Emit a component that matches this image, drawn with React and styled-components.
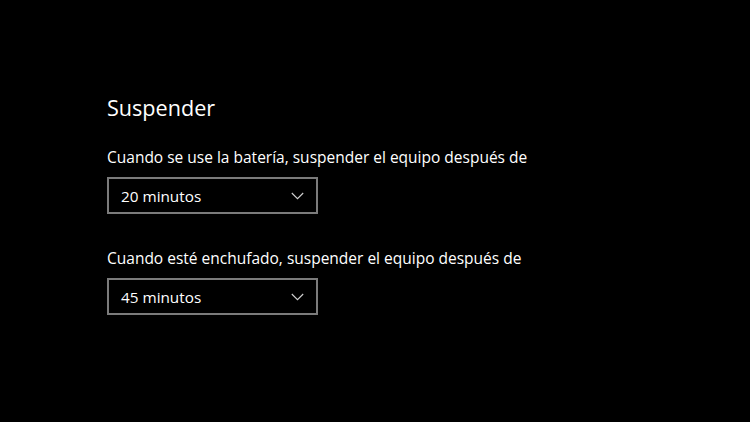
import React from "react";
import styled, { createGlobalStyle } from "styled-components";

const GlobalStyle = createGlobalStyle`
  html, body {
    margin: 0;
    padding: 0;
    background: #000;
  }
  body {
    font-family: "Open Sans", "Noto Sans", sans-serif;
    color: #fff;
  }
`;

const Page = styled.main`
  width: 750px;
  height: 422px;
  background: #000;
  box-sizing: border-box;
  padding: 92px 0 0 107px;
  overflow: hidden;
`;

const Title = styled.h2`
  margin: 0 0 22px;
  font-size: 21.6px;
  font-weight: 400;
  line-height: 32px;
  color: #fff;
`;

const Setting = styled.div`
  display: flex;
  flex-direction: column;
  gap: 9px;
  margin-bottom: ${(p) => p.$gap || 0}px;
`;

const Label = styled.div`
  font-size: 15.5px;
  line-height: 22px;
  color: #fff;
  white-space: nowrap;
`;

const Select = styled.div`
  width: 211px;
  height: 37px;
  box-sizing: border-box;
  border: 2px solid #7b7b7b;
  display: flex;
  align-items: center;
  justify-content: space-between;
  padding: 0 12px 0 12px;
  font-size: 15.3px;
  color: #fff;
`;

const Chevron = () => (
  <svg width="13" height="8" viewBox="0 0 13 8" fill="none">
    <path d="M0.8 1l5.7 5.7 5.7-5.7" stroke="#d0d0d0" strokeWidth="1.1" />
  </svg>
);

const settings = [
  { label: "Cuando se use la batería, suspender el equipo después de", value: "20 minutos" },
  { label: "Cuando esté enchufado, suspender el equipo después de", value: "45 minutos" },
];

export default function App() {
  return (
    <>
      <GlobalStyle />
      <Page>
        <Title>Suspender</Title>
        {settings.map((s, i) => (
          <Setting key={i} $gap={i === 0 ? 33 : 0}>
            <Label>{s.label}</Label>
            <Select>
              <span>{s.value}</span>
              <Chevron />
            </Select>
          </Setting>
        ))}
      </Page>
    </>
  );
}
